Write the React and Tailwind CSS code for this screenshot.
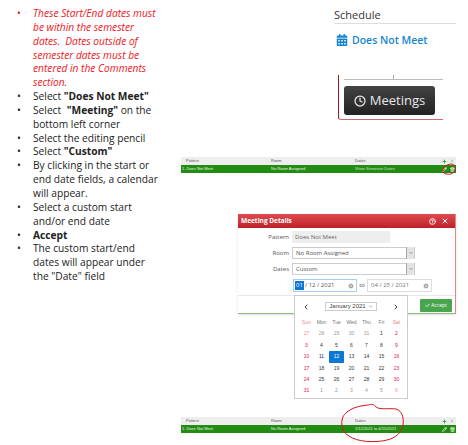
import React from "react";
import { Clock, ChevronDown, ChevronLeft, ChevronRight, CircleHelp, X, Check, Plus, Pencil, Trash2, CircleX } from "lucide-react";
import { FaCalendarAlt } from "react-icons/fa";

const days = [
  ["27", "28", "29", "30", "31", "1", "2"],
  ["3", "4", "5", "6", "7", "8", "9"],
  ["10", "11", "12", "13", "14", "15", "16"],
  ["17", "18", "19", "20", "21", "22", "23"],
  ["24", "25", "26", "27", "28", "29", "30"],
  ["31", "1", "2", "3", "4", "5", "6"],
];

function Bullet({ children, red }) {
  return (
    <li className={"flex text-[10.2px] " + (red ? "text-[#f2141c] italic" : "text-[#222]")}>
      <span className="w-[16px] shrink-0 not-italic">•</span>
      <span>{children}</span>
    </li>
  );
}

function MeetingRow({ room, dates, date2 }) {
  return (
    <div className="text-[4px] leading-[8px] font-['Liberation_Sans',sans-serif]">
      <div className="flex h-[8px] bg-[#eeeeee] text-[#555]">
        <span className="w-[90px] pl-[5px]">Pattern</span>
        <span className="w-[84px]">Room</span>
        <span className="flex-1">Dates</span>
        <Plus size={5} className="mt-[2px] mr-[3px] text-[#2f9a2f]" strokeWidth={4} />
        <X size={4} className="mt-[2px] mr-[2px] text-[#777]" />
      </div>
      <div className="flex h-[8px] bg-[#228b12] text-[#e8f5e4]">
        <span className="w-[90px] pl-[1px]">1. Does Not Meet</span>
        <span className="w-[84px]">{room}</span>
        <span className={"flex-1 " + (date2 ? "" : "opacity-80")}>{dates}</span>
        <Pencil size={5} className="mt-[2px] mr-[3px] text-white" strokeWidth={3} />
        <Trash2 size={5} className="mt-[2px] mr-[1px] text-white" strokeWidth={3} />
      </div>
    </div>
  );
}

function SelectRow({ label, value, width, y }) {
  return (
    <div className={"flex items-center h-[12px] " + y}>
      <span className="w-[54px] pr-[3px] text-right text-[#555]">{label}</span>
      <div className={"flex items-center justify-between h-[12px] border border-[#ccc] bg-white pl-[3px] text-[#555] " + width}>
        {value}
        <span className="flex items-center justify-center w-[8px] h-[12px] bg-[#e4e4e4] border-l border-[#aaa]">
          <ChevronDown size={6} />
        </span>
      </div>
    </div>
  );
}

function MeetingDialog() {
  return (
    <div className="relative ml-[58px] w-[218px] h-[100px] bg-white border-r border-b border-[#d98a8a] border-b-[#8fbf7f] font-['Open_Sans',sans-serif] text-[6px] shadow-sm">
      <div className="flex items-center h-[14px] px-[3px] bg-gradient-to-b from-[#de4a4f] to-[#bd1f27] text-white">
        <span className="text-[6.5px] font-bold flex-1">Meeting Details</span>
        <CircleHelp size={7} className="mr-[5px]" strokeWidth={3} />
        <X size={8} className="mr-[3px]" strokeWidth={3} />
      </div>
      <div className="flex items-center h-[12px] mt-[3px]">
        <span className="w-[54px] pr-[3px] text-right text-[#555]">Pattern</span>
        <div className="w-[98px] h-[12px] bg-[#eeeeee] pl-[3px] leading-[12px] text-[#666]">Does Not Meet</div>
      </div>
      <SelectRow label="Room" value="No Room Assigned" width="w-[123px]" y="mt-[4px]" />
      <SelectRow label="Dates" value="Custom" width="w-[123px]" y="mt-[4px]" />
      <div className="flex items-center h-[13px] mt-[4px] ml-[55px]">
        <div className="flex items-center w-[64px] h-[13px] border border-[#a9cdf0] text-[#555]">
          <span className="bg-[#0a78d4] text-white h-[9px] leading-[9px] px-[1px] ml-[1px]">01</span>
          <span className="ml-[1px] flex-1">/ 12 / 2021</span>
          <CircleX size={6} className="mr-[2px] text-[#777]" fill="#999" stroke="#fff" />
        </div>
        <span className="w-[10px] text-center text-[#555]">to</span>
        <div className="flex items-center justify-between w-[65px] h-[13px] border border-[#ddd] pl-[3px] text-[#777]">
          04 / 25 / 2021
          <CircleX size={6} className="mr-[2px]" fill="#999" stroke="#fff" />
        </div>
      </div>
      <div className="flex justify-end mt-[3px] pt-[3px] pr-[3px] border-t border-[#e8e8e8]">
        <div className="flex items-center justify-center gap-[1px] w-[32px] h-[13px] rounded-[1px] bg-[#4aa64e] text-white text-[5px]">
          <Check size={5} strokeWidth={4} />
          Accept
        </div>
      </div>
      <div className="absolute left-[56px] top-[81px] w-[114px] h-[104px] bg-white border border-[#ccc] font-['Liberation_Sans',sans-serif] text-[5px] z-10">
        <div className="flex items-center justify-between h-[21px] px-[7px] text-[#444]">
          <ChevronLeft size={8} strokeWidth={3} />
          <div className="flex items-center justify-center gap-[2px] w-[52px] h-[9px] border border-[#ccc] text-[6px]">
            January 2021
            <ChevronDown size={5} />
          </div>
          <ChevronRight size={8} strokeWidth={3} />
        </div>
        <div className="grid grid-cols-7 w-[105px] ml-[4px] text-center leading-[11.4px]">
          {["Sun", "Mon", "Tue", "Wed", "Thu", "Fri", "Sat"].map((d, i) => (
            <span key={d} className={i === 0 || i === 6 ? "text-[#e88a8a]" : "text-[#777]"}>{d}</span>
          ))}
          {days.flat().map((d, i) => {
            const off = i < 5 || i > 35;
            const weekend = i % 7 === 0 || i % 7 === 6;
            let color = off ? "text-[#999]" : "text-[#333]";
            if (weekend) color = off ? "text-[#e99]" : "text-[#e8104a]";
            return (
              <span key={i} className={d === "12" ? "bg-[#0a78d4] text-white rounded-[1px]" : color}>{d}</span>
            );
          })}
        </div>
      </div>
    </div>
  );
}

export default function App() {
  return (
    <div className="flex w-[468px] h-[445px] overflow-hidden bg-white">
      <ul className="w-[180px] shrink-0 pt-[7px] pl-[17px] pr-[21px] leading-[13.85px] font-['Open_Sans',sans-serif]">
        <Bullet red>These Start/End dates must be within the semester dates.&nbsp; Dates outside of semester dates must be entered in the Comments section.</Bullet>
        <Bullet>Select <b>"Does Not Meet"</b></Bullet>
        <Bullet>Select <b className="ml-[3px]">"Meeting"</b> on the bottom left corner</Bullet>
        <Bullet>Select the editing pencil</Bullet>
        <Bullet>Select <b>"Custom"</b></Bullet>
        <Bullet>By clicking in the start or end date fields, a calendar will appear.</Bullet>
        <Bullet>Select a custom start and/or end date</Bullet>
        <Bullet><b>Accept</b></Bullet>
        <Bullet>The custom start/end dates will appear under the "Date" field</Bullet>
      </ul>

      <div className="relative flex-1 font-['Open_Sans',sans-serif]">
        <div className="ml-[154px] w-[122px] h-[75px] pt-[7px]">
          <div className="h-[17px] border-b border-[#ddd] text-[11px] leading-[16px] text-[#333] font-medium">Schedule</div>
          <div className="flex items-center gap-[4px] mt-[8px] ml-[2px] text-[10.5px] leading-[16px] font-semibold text-[#1585cf]">
            <FaCalendarAlt size={12} />
            Does Not Meet
          </div>
        </div>

        <div className="ml-[158px] w-[105px] h-[45px] pl-[5px] border-l border-b border-l-[#a01820] border-b-[#cf6a70] rounded-bl-[3px]">
          <div className="flex justify-center h-[5px] border-b border-[#bbb]">
            <div className="w-px h-[4px] bg-[#aaa]"></div>
          </div>
          <div className="flex items-center justify-center gap-[4px] mt-[6px] w-[91px] h-[29px] rounded-[3px] bg-gradient-to-b from-[#444] to-[#222] text-[13px] text-[#e8e8e8]">
            <Clock size={12} strokeWidth={2.5} />
            Meetings
          </div>
        </div>

        <div className="ml-[1px] mt-[37px] w-[275px]">
          <MeetingRow room="No Room Assigned" dates="Show Semester Dates" />
        </div>

        <div className="mt-[41px]">
          <MeetingDialog />
        </div>

        <div className="ml-[1px] mt-[103px] w-[275px]">
          <MeetingRow room="No Room Assigned" dates="1/12/2021 to 4/25/2021" date2 />
        </div>

        <svg className="absolute left-[260px] top-[161px] pointer-events-none" width="20" height="16" viewBox="0 0 20 16" fill="none">
          <path d="M3 8c1-3 5-5 9-5 3 1 4 3 3 6-1 3-4 5-8 4-3 0-5-2-4-5z" stroke="#e0141c" strokeWidth="1" />
        </svg>
        <svg className="absolute left-[160px] top-[400px] pointer-events-none" width="70" height="45" viewBox="0 0 70 45" fill="none">
          <path d="M2 20C3 12 14 6 28 5c4-1 6-1 8 2 4 3 14 1 20 2 6 2 8 8 7 16-1 7-7 13-16 15-12 3-30 2-38-4C3 33 1 27 2 20z" stroke="#d8141c" strokeWidth="1" />
        </svg>
      </div>
    </div>
  );
}
